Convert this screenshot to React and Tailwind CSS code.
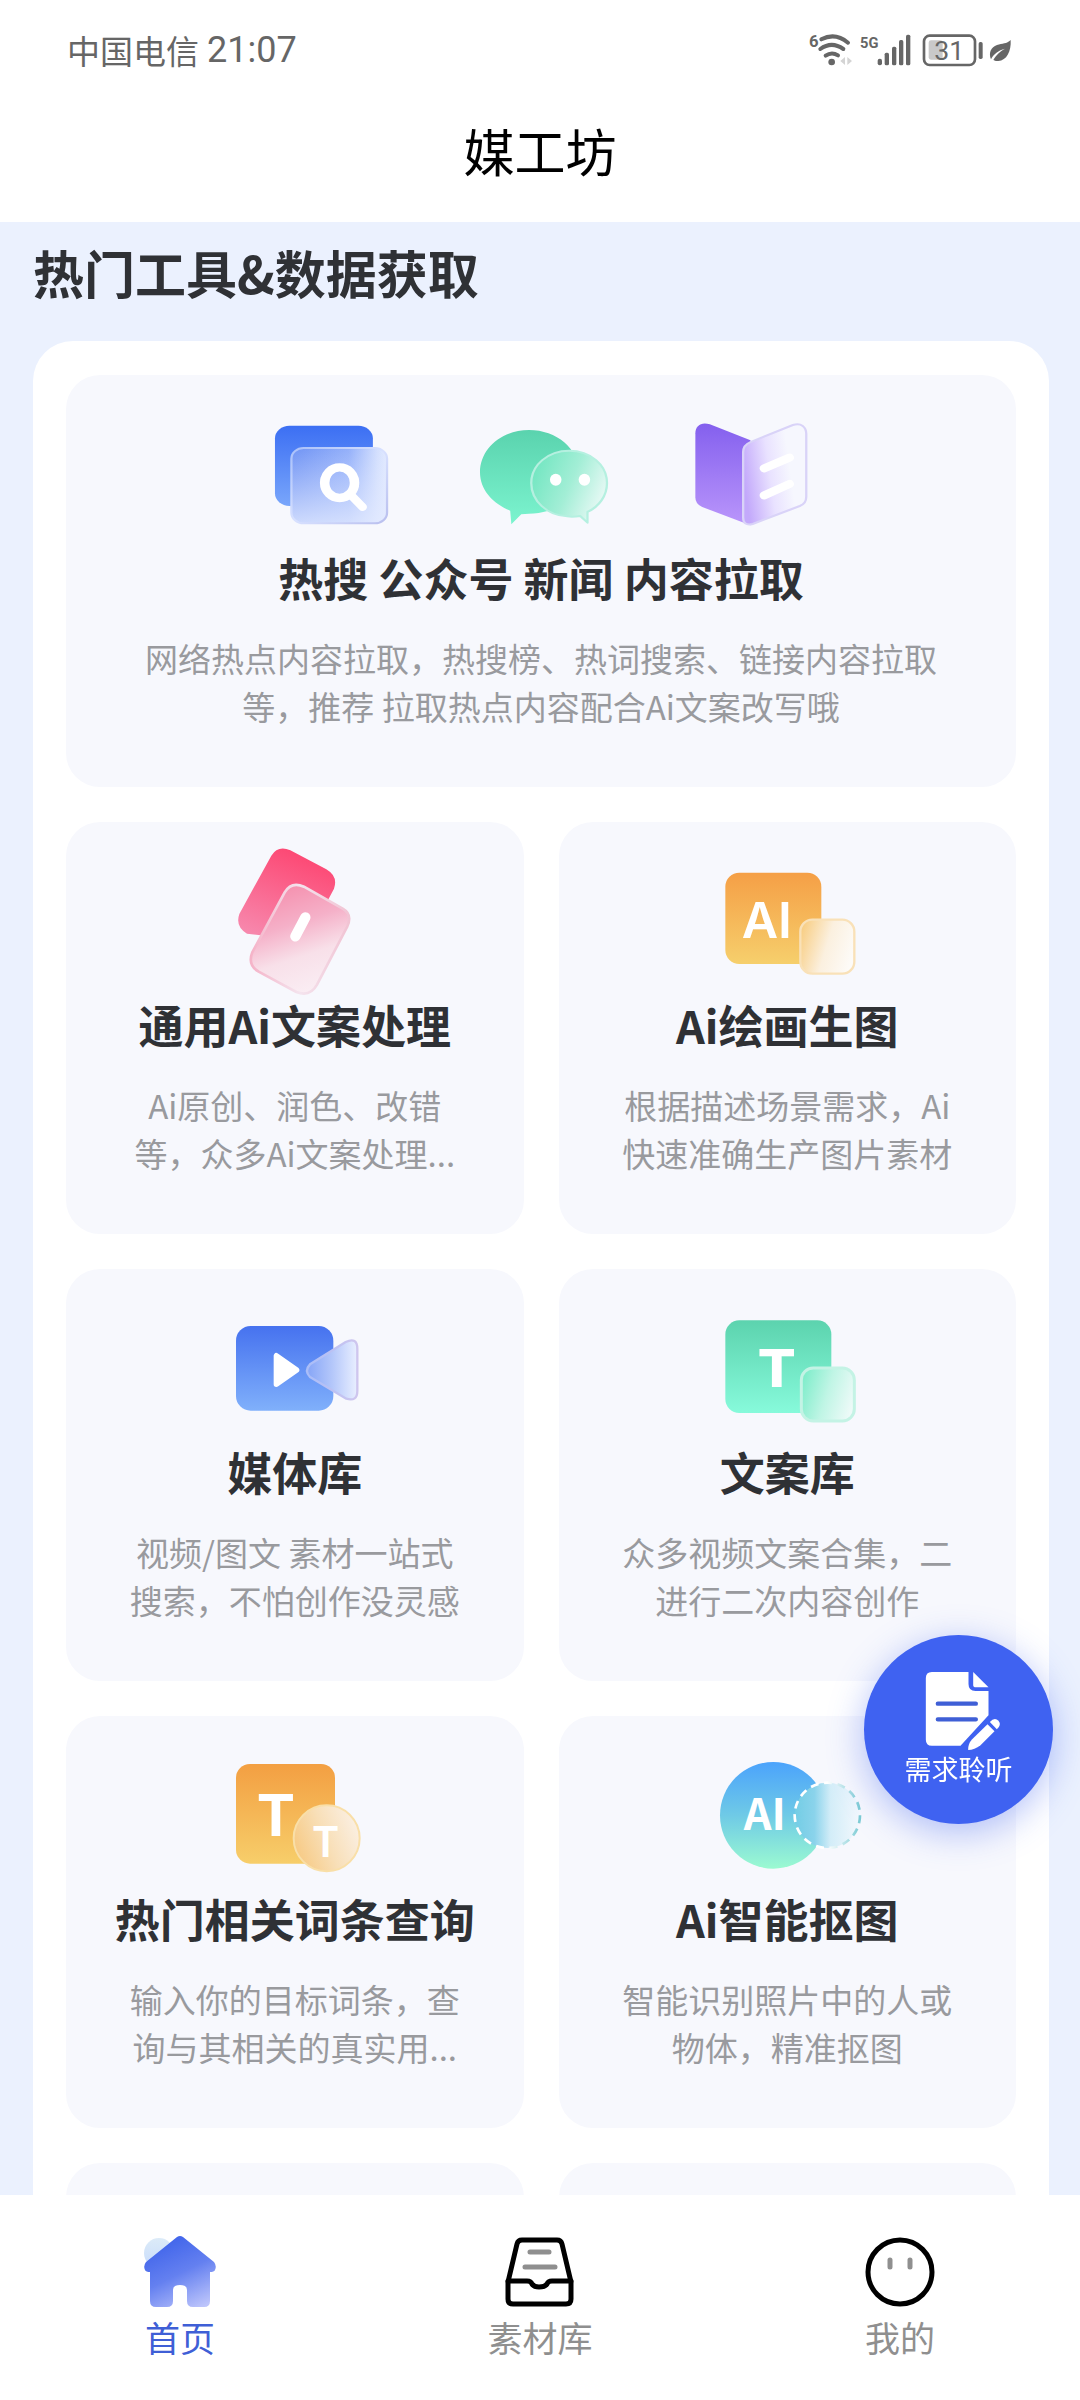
import React from "react";

const cjk = "font-['Noto_Sans_CJK_SC',sans-serif]";

function Gradient({ id, from, to, x1 = 0, y1 = 0, x2 = 0, y2 = 1, mid }) {
  return (
    <linearGradient id={id} x1={x1} y1={y1} x2={x2} y2={y2}>
      <stop offset="0" stopColor={from} />
      {mid && <stop offset="0.5" stopColor={mid} />}
      <stop offset="1" stopColor={to} />
    </linearGradient>
  );
}

function StatusIcons() {
  return (
    <svg viewBox="0 0 780 210" className="h-[70px] w-[260px]" role="img" aria-label="Wi-Fi 6, 5G, 31%">
      <g fill="#666" fontFamily="Roboto, sans-serif">
        <text x="87" y="81" fontSize="50" fontWeight="700">6</text>
        <text x="240" y="83" fontSize="44" fontWeight="700">5G</text>
        <g fill="none" stroke="#666" strokeWidth="12" strokeLinecap="round">
          <path d="M124 58Q166 36 204 68" />
          <path d="M121 87Q155 62 190 87" />
          <path d="M137 107Q155 94 174 106" />
        </g>
        <circle cx="155" cy="126" r="10" />
        <path d="M181 123l14-12v24zM216 123l-14-12v24z" fill="#d4d4d4" />
        <rect x="293" y="116" width="13" height="20" rx="6" />
        <rect x="314" y="98" width="13" height="38" rx="5" />
        <rect x="336" y="80" width="13" height="56" rx="5" />
        <rect x="357" y="60" width="13" height="76" rx="5" />
        <rect x="378" y="44" width="13" height="92" rx="5" />
        <rect x="446" y="61" width="42" height="58" rx="7" fill="#c9c9c9" />
        <rect x="432" y="47" width="153" height="88" rx="17" fill="none" stroke="#666" strokeWidth="8" />
        <rect x="596" y="66" width="12" height="51" rx="5" />
        <text x="508" y="120" fontSize="80" textAnchor="middle">31</text>
        <path d="M692 60C694 95 680 121 655 123C648 124 643 121 640 120C650 103 661 94 675 86C656 90 640 103 633 118C625 98 633 82 651 75C667 70 680 72 692 60Z" />
      </g>
    </svg>
  );
}

function SearchIcon() {
  return (
    <svg viewBox="-37 -39 549 462" className="h-[177px] w-[210px]" aria-hidden="true">
      <defs>
        <Gradient id="s1" from="#3c6ff3" to="#79a6fb" />
        <linearGradient id="s2" x1="0" y1="0" x2="1" y2="0">
          <stop offset="0" stopColor="#6f93f4" />
          <stop offset="0.6" stopColor="#94b0fa" />
          <stop offset="0.9" stopColor="#d3dffe" />
          <stop offset="1" stopColor="#e2eaff" />
        </linearGradient>
        <linearGradient id="s3" x1="0" y1="0" x2="0" y2="1">
          <stop offset="0" stopColor="#e4ebff" stopOpacity="0" />
          <stop offset="1" stopColor="#e4ebff" stopOpacity="0.8" />
        </linearGradient>
        <Gradient id="s4" from="#a9c0fa" mid="#d8e1ff" to="#b9bfee" x2={1} />
      </defs>
      <g transform="scale(1 0.871)">
        <rect x="91" y="107" width="256" height="241" rx="38" fill="url(#s1)" />
        <rect x="134" y="174" width="250" height="226" rx="32" fill="url(#s2)" />
        <rect x="134" y="174" width="250" height="226" rx="32" fill="url(#s3)" stroke="url(#s4)" strokeWidth="6" />
        <ellipse cx="260" cy="278" rx="39" ry="46" fill="none" stroke="#fff" strokeWidth="25" />
        <path d="M292 318L320 351" stroke="#fff" strokeWidth="23" strokeLinecap="round" />
      </g>
    </svg>
  );
}

function ChatIcon() {
  return (
    <svg viewBox="512 -39 549 462" className="h-[177px] w-[210px]" aria-hidden="true">
      <defs>
        <Gradient id="c1" from="#5ad3ae" to="#7cf4cf" />
        <Gradient id="c2" from="#72e6c1" mid="#a3eed6" to="#eefaf8" y1={0.3} x2={1} y2={0.7} />
      </defs>
      <g transform="scale(1 0.871)">
        <path d="M755 120C828 120 885 176 885 247C885 320 829 371 755 371L735 373L709 403L706 362C658 339 627 297 627 247C627 176 683 120 755 120Z" fill="url(#c1)" />
        <path d="M860 182C916 182 959 225 959 279C959 317 939 349 908 366V398L889 378C877 380 866 381 855 379C803 377 761 333 761 279C761 225 805 182 860 182Z" fill="url(#c2)" stroke="#b5f0e0" strokeWidth="6" strokeLinejoin="round" />
        <ellipse cx="825" cy="269" rx="15" ry="18" fill="#fff" />
        <ellipse cx="900" cy="269" rx="15" ry="18" fill="#fff" />
      </g>
    </svg>
  );
}

function BookIcon() {
  return (
    <svg viewBox="1061 -39 549 462" className="h-[177px] w-[210px]" aria-hidden="true">
      <defs>
        <Gradient id="b1" from="#8460ee" to="#ba96fb" />
        <linearGradient id="b2" x1="0" y1="0.5" x2="0.9" y2="0.3">
          <stop offset="0" stopColor="#c3a9fb" />
          <stop offset="0.45" stopColor="#e9e2ff" />
          <stop offset="0.8" stopColor="#f6f7fe" />
        </linearGradient>
      </defs>
      <g transform="scale(1 0.871)">
        <path d="M1190 130C1190 106 1207 94 1228 103L1334 151V406L1208 351Q1190 343 1190 322Z" fill="url(#b1)" />
        <path d="M1315 186Q1315 165 1334 156L1445 105C1467 97 1480 111 1480 132V320Q1480 340 1463 348L1340 402Q1315 409 1315 383Z" fill="url(#b2)" stroke="#d9d3f8" strokeWidth="6" />
        <path d="M1370 235L1436 203M1370 316L1436 282" stroke="#fff" strokeWidth="24" strokeLinecap="round" />
      </g>
    </svg>
  );
}

function RewriteIcon() {
  return (
    <svg viewBox="-15 -24 600 531" className="h-[177px] w-[200px]" aria-hidden="true">
      <defs>
        <Gradient id="r1" from="#fd4470" to="#f788ad" x1={0.7} x2={0.3} />
        <linearGradient id="r2" x1="0.35" y1="0" x2="0.65" y2="1">
          <stop offset="0" stopColor="#f590ae" />
          <stop offset="0.35" stopColor="#f5b0c8" />
          <stop offset="0.65" stopColor="#f8e0e9" />
          <stop offset="1" stopColor="#faeef4" />
        </linearGradient>
        <Gradient id="r3" from="#f5b3c8" mid="#f4e4ee" to="#f1c3d3" x1={0} y1={0.5} x2={1} y2={0.5} />
      </defs>
      <path d="M214 77Q234 45 271 61L379 118Q415 139 402 176L333 306Q312 342 273 326L141 311Q105 290 118 252Z" fill="url(#r1)" />
      <path d="M254 187Q274 153 312 170L428 236Q458 253 442 289L351 464Q330 502 289 486L176 425Q142 405 157 367Z" fill="url(#r2)" stroke="url(#r3)" strokeWidth="8" />
      <path d="M316 262L286 319" stroke="#fff" strokeWidth="31" strokeLinecap="round" />
    </svg>
  );
}

function PaintIcon() {
  return (
    <svg viewBox="21 -24 600 531" className="h-[177px] w-[200px]" aria-hidden="true">
      <defs>
        <Gradient id="p1" from="#f59f46" to="#f6cf6c" />
        <Gradient id="p2" from="#f8cf87" mid="#fbf0df" to="#fdfbf8" y1={0.3} x2={1} y2={0.6} />
      </defs>
      <rect x="136" y="128" width="288" height="274" rx="42" fill="url(#p1)" />
      <text x="185" y="325" fontSize="150" fontWeight="600" fill="#fff" fontFamily="Inter, sans-serif">AI</text>
      <rect x="361" y="269" width="162" height="162" rx="36" fill="url(#p2)" stroke="#f9e1b8" strokeWidth="7" />
    </svg>
  );
}

function MediaIcon() {
  return (
    <svg viewBox="-15 -63 600 531" className="h-[177px] w-[200px]" aria-hidden="true">
      <defs>
        <Gradient id="m1" from="#4672ef" to="#80b0fb" />
        <Gradient id="m2" from="#86a5f7" mid="#b4c7fa" to="#e9efff" y1={0.5} x2={1} y2={0.5} />
        <Gradient id="m3" from="#a9bdf8" to="#cfc6ee" x2={1} y2={0} />
      </defs>
      <rect x="108" y="108" width="292" height="254" rx="44" fill="url(#m1)" />
      <path d="M229 197V283L290 240Z" fill="#fff" stroke="#fff" strokeWidth="16" strokeLinejoin="round" />
      <path d="M330 223L437 156Q472 140 472 177V302Q472 336 439 326L330 261Q312 242 330 223Z" fill="url(#m2)" stroke="url(#m3)" strokeWidth="7" strokeLinejoin="round" />
    </svg>
  );
}

function CopyIcon() {
  return (
    <svg viewBox="21 -63 600 531" className="h-[177px] w-[200px]" aria-hidden="true">
      <defs>
        <Gradient id="k1" from="#5cd3ae" to="#87fadb" />
        <Gradient id="k2" from="#80edcb" mid="#c0f5e5" to="#edfaf8" y1={0.3} x2={1} y2={0.6} />
      </defs>
      <rect x="136" y="91" width="318" height="278" rx="42" fill="url(#k1)" />
      <text x="290" y="292" fontSize="154" fontWeight="700" fill="#fff" textAnchor="middle" fontFamily="'DejaVu Sans', sans-serif">T</text>
      <rect x="364" y="234" width="159" height="159" rx="36" fill="url(#k2)" stroke="#c4f3e5" strokeWidth="9" />
    </svg>
  );
}

function TermsIcon() {
  return (
    <svg viewBox="-15 -42 600 531" className="h-[177px] w-[200px]" aria-hidden="true">
      <defs>
        <Gradient id="t1" from="#f39f42" to="#f7ce6a" />
        <Gradient id="t2" from="#f7c982" mid="#f8dfb8" to="#fbf0e4" y1={0.7} x2={1} y2={0.3} />
      </defs>
      <rect x="108" y="102" width="297" height="299" rx="42" fill="url(#t1)" />
      <text x="228" y="318" fontSize="172" fontWeight="700" fill="#fff" textAnchor="middle" fontFamily="Inter, sans-serif">T</text>
      <circle cx="380" cy="325" r="99" fill="url(#t2)" stroke="#f9dfa8" strokeWidth="6" />
      <text x="377" y="381" fontSize="126" fontWeight="700" fill="#fff" textAnchor="middle" fontFamily="Lato, sans-serif">T</text>
    </svg>
  );
}

function CutoutIcon() {
  return (
    <svg viewBox="21 348 600 531" className="h-[177px] w-[200px]" aria-hidden="true">
      <defs>
        <Gradient id="a1" from="#4ba3fc" mid="#6fcae6" to="#9bfad1" />
        <linearGradient id="a2" x1="0" y1="0.5" x2="1" y2="0.5">
          <stop offset="0" stopColor="#73cde5" />
          <stop offset="0.3" stopColor="#8ad3eb" />
          <stop offset="0.55" stopColor="#d3edf8" />
          <stop offset="1" stopColor="#f3f8fd" />
        </linearGradient>
        <Gradient id="a3" from="#ffffff" mid="#ffffff" to="#7ccbd4" y1={0.5} x2={1} y2={0.5} />
      </defs>
      <circle cx="280" cy="646" r="160" fill="url(#a1)" />
      <text x="254" y="690" fontSize="130" fontWeight="700" fill="#fff" textAnchor="middle" fontFamily="'Noto Sans CJK SC', sans-serif">AI</text>
      <circle cx="442" cy="646" r="98" fill="url(#a2)" stroke="url(#a3)" strokeWidth="8" strokeDasharray="24 17" />
    </svg>
  );
}

function ToolCard({ icon, title, desc, wide }) {
  return (
    <article
      className={
        wide
          ? "col-span-2 flex flex-col items-center rounded-[34px] bg-[#f7f8fd] px-15 pb-[57px] text-center"
          : "flex flex-col items-center rounded-[34px] bg-[#f7f8fd] pb-[57px] text-center"
      }
    >
      <div className="flex justify-center">{icon}</div>
      <h3 className="text-[45px] leading-[52px] font-bold whitespace-nowrap text-[#2f3135]">{title}</h3>
      <p className={wide ? "mt-[30px] text-[33px] leading-[48px] text-[#999a9e]" : "mt-[30px] px-15 text-[33px] leading-[48px] text-[#999a9e]"}>
        {desc}
      </p>
    </article>
  );
}

const tools = [
  { icon: <RewriteIcon />, title: "通用Ai文案处理", desc: "Ai原创、润色、改错等，众多Ai文案处理..." },
  { icon: <PaintIcon />, title: "Ai绘画生图", desc: "根据描述场景需求，Ai快速准确生产图片素材" },
  { icon: <MediaIcon />, title: "媒体库", desc: "视频/图文 素材一站式搜索，不怕创作没灵感" },
  { icon: <CopyIcon />, title: "文案库", desc: "众多视频文案合集，二进行二次内容创作" },
  { icon: <TermsIcon />, title: "热门相关词条查询", desc: "输入你的目标词条，查询与其相关的真实用..." },
  { icon: <CutoutIcon />, title: "Ai智能抠图", desc: "智能识别照片中的人或物体，精准抠图" },
];

function HomeIcon() {
  return (
    <svg viewBox="0 0 72 72" className="size-[72px]" aria-hidden="true">
      <defs>
        <Gradient id="h1" from="#3d62ea" mid="#6480f0" to="#bcc4fb" x1={0.3} x2={0.8} />
        <Gradient id="h2" from="#dcebf8" to="#c8dcfb" />
      </defs>
      <circle cx="15" cy="18" r="15" fill="url(#h2)" />
      <path d="M33 2Q36 0 39 2L70 27Q73 31 71 35Q70 37 66 37V66Q66 72 60 72H49Q43 72 43 66V55Q43 50 36 50Q29 50 29 55V66Q29 72 23 72H12Q6 72 6 66V37Q2 37 1 35Q-1 31 2 27Z" fill="url(#h1)" />
    </svg>
  );
}

function LibraryIcon() {
  return (
    <svg viewBox="0 0 72 72" className="size-[72px]" fill="none" strokeLinecap="round" strokeLinejoin="round" aria-hidden="true">
      <path d="M4 47L13 9Q14 5 18 5H53Q57 5 58 9L67 47V64Q67 69 62 69H9Q4 69 4 64Z" stroke="#000" strokeWidth="5" />
      <path d="M4 46H23Q27 46 28 49Q30 52 35 52Q41 52 43 49Q44 46 48 46H67" stroke="#000" strokeWidth="5" />
      <path d="M26 17H45M21 32H51" stroke="#8f8f8f" strokeWidth="5" />
    </svg>
  );
}

function MineIcon() {
  return (
    <svg viewBox="0 0 72 72" className="size-[72px]" fill="none" strokeLinecap="round" aria-hidden="true">
      <circle cx="36" cy="37" r="32" stroke="#000" strokeWidth="5" />
      <path d="M26 25V32M46 25V32" stroke="#8f8f8f" strokeWidth="5" />
    </svg>
  );
}

function FeedbackIcon() {
  return (
    <svg viewBox="706 210 260 243" className="h-[81px] w-[87px]" aria-hidden="true">
      <path d="M756 216H866V252Q866 273 887 273H926V346L842 437H756Q738 437 738 419V234Q738 216 756 216Z" fill="#fff" />
      <path d="M880 216L926 262H888Q880 262 880 254Z" fill="#fff" />
      <path d="M774 311H888M774 358H888" stroke="#3f5fd6" strokeWidth="13" strokeLinecap="round" />
      <path d="M923 373L944 394L902 436Q884 450 865 450Q864 432 877 418Z" fill="#fff" />
      <path d="M930 366Q944 350 956 362Q966 374 951 388Z" fill="#fff" />
    </svg>
  );
}

const tabs = [
  { label: "首页", icon: <HomeIcon />, active: true },
  { label: "素材库", icon: <LibraryIcon /> },
  { label: "我的", icon: <MineIcon /> },
];

export default function App() {
  return (
    <div className={`flex h-screen flex-col bg-white ${cjk}`}>
      <header className="shrink-0">
        <div className="flex items-start justify-between pt-5 pr-10 pl-[67px]">
          <div className="flex items-center gap-2 text-[33px] leading-[60px] text-[#666]">
            <span>中国电信</span>
            <time className="font-['Roboto',sans-serif] text-[36px]">21:07</time>
          </div>
          <StatusIcons />
        </div>
        <h1 className="pt-[26px] pb-[38px] text-center text-[51px] leading-[68px] text-black">媒工坊</h1>
      </header>

      <main className="min-h-0 flex-1 overflow-y-auto bg-[#ebf1fe] pr-[31px] pl-[33px] [scrollbar-width:none]">
        <h2 className="pt-[18px] pb-[37px] text-[51px] leading-[64px] font-bold text-[#2f3135]">热门工具&amp;数据获取</h2>
        <section className="grid grid-cols-2 gap-[35px] rounded-t-[40px] bg-white px-[33px] pt-[34px]">
          <ToolCard
            wide
            icon={
              <>
                <SearchIcon />
                <ChatIcon />
                <BookIcon />
              </>
            }
            title="热搜 公众号 新闻 内容拉取"
            desc="网络热点内容拉取，热搜榜、热词搜索、链接内容拉取等，推荐 拉取热点内容配合Ai文案改写哦"
          />
          {tools.map((tool) => (
            <ToolCard key={tool.title} {...tool} />
          ))}
          <div className="h-[412px] rounded-[34px] bg-[#f7f8fd]" />
          <div className="h-[412px] rounded-[34px] bg-[#f7f8fd]" />
        </section>
      </main>

      <button
        type="button"
        className="fixed right-[27px] bottom-[576px] flex size-[189px] flex-col items-center rounded-full bg-[#3f62f1] pt-[35px] text-white shadow-[0_8px_36px_rgba(63,98,241,0.4)]"
      >
        <FeedbackIcon />
        <span className="mt-1 text-[27px] leading-7">需求聆听</span>
      </button>

      <nav className="grid shrink-0 grid-cols-3 bg-white pt-10 pb-[39px]">
        {tabs.map(({ label, icon, active }) => (
          <a key={label} href="#" className="flex flex-col items-center gap-1.5">
            {icon}
            <span className={active ? "text-[35px] leading-[48px] text-[#3f5fd6]" : "text-[35px] leading-[48px] text-[#8f8f8f]"}>
              {label}
            </span>
          </a>
        ))}
      </nav>
    </div>
  );
}
